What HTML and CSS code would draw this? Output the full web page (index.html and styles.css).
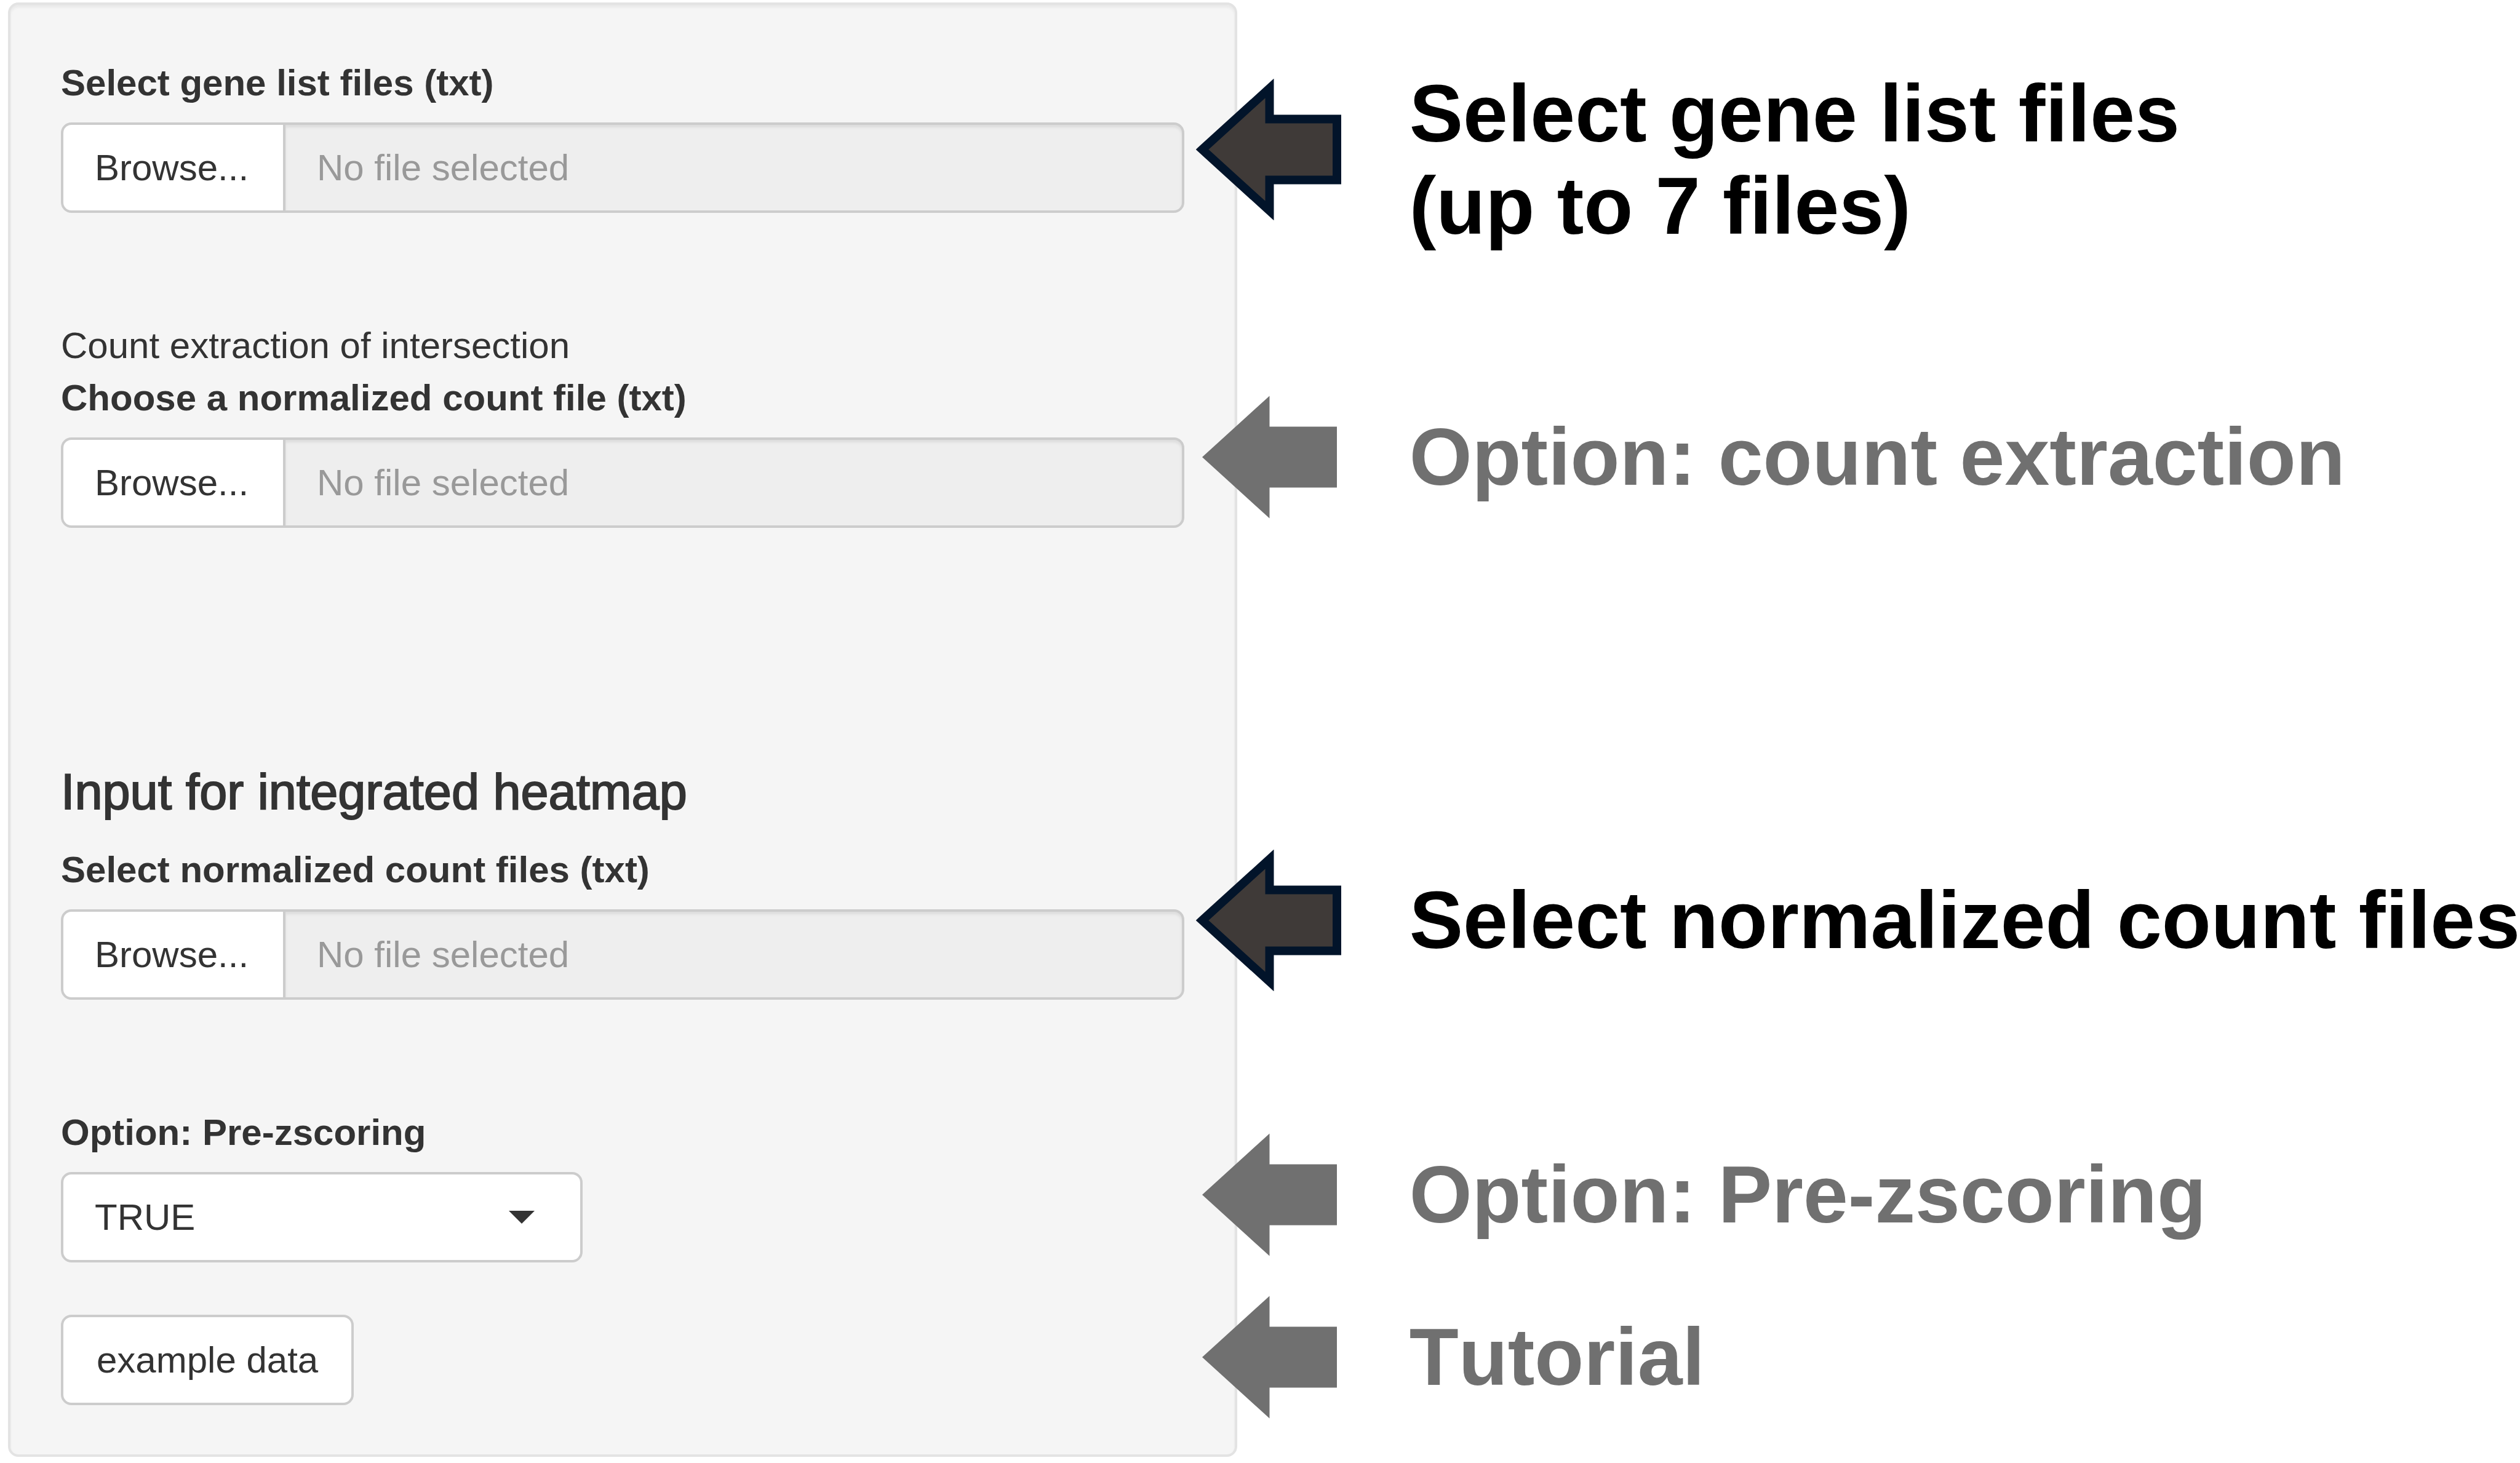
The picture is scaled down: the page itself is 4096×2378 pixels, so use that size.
FILE: index.html
```html
<!DOCTYPE html>
<html lang="en">
<head>
<meta charset="utf-8">
<meta name="viewport" content="width=device-width, initial-scale=1">
<title>Gene list input guide</title>
<link rel="stylesheet" href="styles.css">
</head>
<body>
<svg class="symbols" aria-hidden="true">
  <symbol id="arrow" viewBox="0 0 236 230">
    <path d="M10 115 L119.500 15.500 V65.500 H229 V164.500 H119.500 V214.500 Z"/>
  </symbol>
</svg>
<main class="page">
  <form class="panel">
    <div class="field">
      <label class="label" for="gene-files">Select gene list files (txt)</label>
      <div class="file">
        <button class="browse" type="button">Browse...</button>
        <input class="filename" id="gene-files" type="text" placeholder="No file selected" readonly>
      </div>
    </div>

    <div class="field">
      <p class="note">Count extraction of intersection</p>
      <label class="label" for="count-file">Choose a normalized count file (txt)</label>
      <div class="file">
        <button class="browse" type="button">Browse...</button>
        <input class="filename" id="count-file" type="text" placeholder="No file selected" readonly>
      </div>
    </div>

    <h4 class="heading">Input for integrated heatmap</h4>
    <div class="field">
      <label class="label" for="heatmap-files">Select normalized count files (txt)</label>
      <div class="file">
        <button class="browse" type="button">Browse...</button>
        <input class="filename" id="heatmap-files" type="text" placeholder="No file selected" readonly>
      </div>
    </div>

    <div class="field">
      <label class="label" for="zscoring">Option: Pre-zscoring</label>
      <div class="dropdown">
        <select class="select" id="zscoring">
          <option>TRUE</option>
          <option>FALSE</option>
        </select>
        <svg class="caret" viewBox="0 0 42 21" aria-hidden="true"><path d="M0 0H42L21 21Z"/></svg>
      </div>
    </div>

    <button class="example" type="button">example data</button>
  </form>

  <aside class="callouts">
    <div class="callout callout-genes">
      <svg class="arrow arrow-required" aria-hidden="true"><use href="#arrow"/></svg>
      <p class="caption">Select gene list files<br>(up to 7 files)</p>
    </div>
    <div class="callout callout-count optional">
      <svg class="arrow" aria-hidden="true"><use href="#arrow"/></svg>
      <p class="caption">Option: count extraction</p>
    </div>
    <div class="callout callout-heatmap">
      <svg class="arrow arrow-required" aria-hidden="true"><use href="#arrow"/></svg>
      <p class="caption">Select normalized count files</p>
    </div>
    <div class="callout callout-zscoring optional">
      <svg class="arrow" aria-hidden="true"><use href="#arrow"/></svg>
      <p class="caption">Option: Pre-zscoring</p>
    </div>
    <div class="callout callout-tutorial optional">
      <svg class="arrow" aria-hidden="true"><use href="#arrow"/></svg>
      <p class="caption">Tutorial</p>
    </div>
  </aside>
</main>
</body>
</html>
```

FILE: styles.css
```css
* {
  box-sizing: border-box;
}

body {
  margin: 0;
  background: #fff;
  color: #333;
  font: 60px/85px "Liberation Sans", Arial, sans-serif;
}

p,
h4 {
  margin: 0;
}

button,
input,
select {
  margin: 0;
  font: inherit;
  color: inherit;
}

.symbols {
  display: none;
}

.page {
  display: grid;
  grid-template-columns: 23fr 24fr;
  align-items: start;
  padding: 4px 0 10px 13px;
}

/* Left: input panel */

.panel {
  display: flex;
  flex-direction: column;
  align-items: stretch;
  padding: 84px 82px 80px;
  border: 4px solid #e3e3e3;
  border-radius: 17px;
  background: #f5f5f5;
  box-shadow: inset 0 4px 4px rgba(0, 0, 0, 0.05);
}

.field + .field {
  margin-top: 173px;
}

.label {
  display: block;
  margin-bottom: 22px;
  font-weight: 700;
}

.file {
  display: flex;
  height: 147px;
}

.browse,
.example,
.select {
  height: 147px;
  padding: 0 51px;
  border: 4px solid #ccc;
  border-radius: 17px;
  background: #fff;
}

.browse {
  flex: none;
  width: 361px;
  border-right: 0;
  border-radius: 17px 0 0 17px;
  text-align: left;
}

.filename {
  flex: 1;
  min-width: 0;
  padding: 0 51px;
  border: 4px solid #ccc;
  border-radius: 0 17px 17px 0;
  background: #eee;
  box-shadow: inset 0 4px 4px rgba(0, 0, 0, 0.075);
}

.filename::placeholder {
  color: #999;
  opacity: 1;
}

.heading {
  margin: 387px 0 41px;
  font-size: 81px;
  font-weight: 400;
  line-height: 85px;
  -webkit-text-stroke: 2px currentColor;
}

.dropdown {
  display: grid;
  align-items: center;
  width: 848px;
  max-width: 100%;
}

.select {
  grid-area: 1 / 1;
  width: 100%;
  appearance: none;
}

.caret {
  grid-area: 1 / 1;
  justify-self: end;
  width: 42px;
  height: 21px;
  margin-right: 78px;
  fill: #333;
  pointer-events: none;
}

.example {
  align-self: flex-start;
  margin-top: 85px;
  padding: 0 54px;
}

/* Right: callouts, whose arrows reach over the panel's edge */

.callouts {
  margin-left: -67px;
  color: #000;
  font-size: 131px;
  font-weight: 700;
  font-kerning: none;
  line-height: 150px;
}

.callout {
  display: flex;
  align-items: center;
  gap: 111px;
}

.callout-genes {
  align-items: flex-start;
  padding-top: 106px;
}

.callout-genes .arrow {
  margin-top: 18px;
}

.callout-count {
  margin-top: 218px;
}

.callout-heatmap {
  margin-top: 523px;
}

.callout-zscoring {
  margin-top: 216px;
}

.callout-tutorial {
  margin-top: 34px;
}

.arrow {
  flex: none;
  width: 236px;
  height: 230px;
  fill: #707070;
}

.arrow-required {
  fill: #3f3a38;
  stroke: #02142a;
  stroke-width: 14px;
}

.caption {
  white-space: nowrap;
}

.optional {
  color: #707070;
}
```
